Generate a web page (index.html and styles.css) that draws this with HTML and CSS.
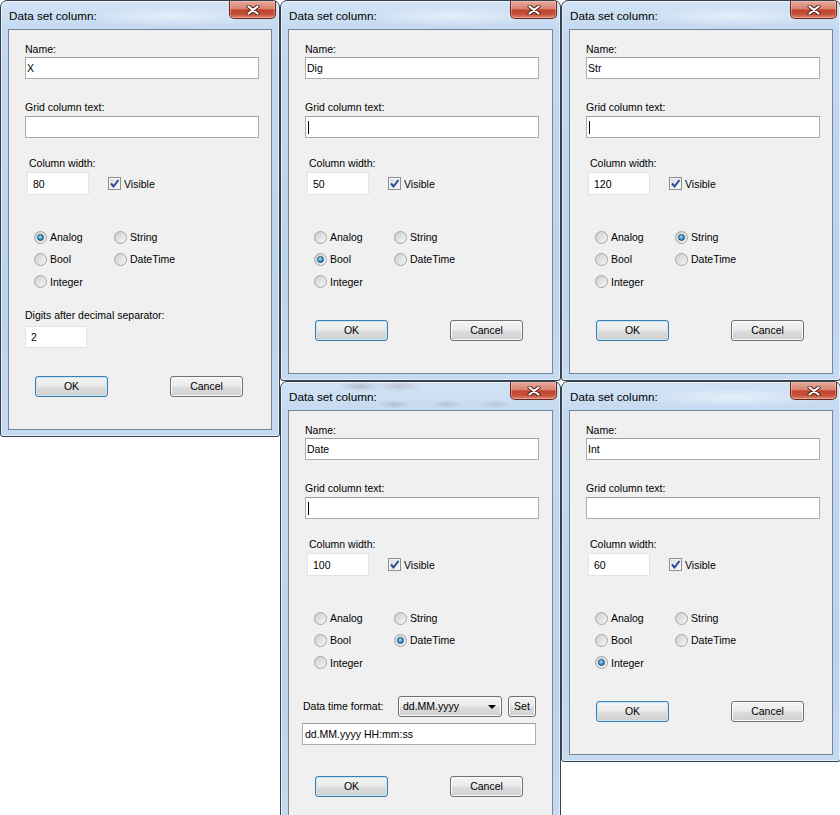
FILE: index.html
```html
<!DOCTYPE html>
<html lang="en">
<head>
  <meta charset="UTF-8">
  <meta name="viewport" content="width=device-width, initial-scale=1.0">
  <title>Data set column</title>
  <link rel="stylesheet" href="styles.css">
</head>
<body>
  <div class="desktop">

    <!-- Analog -->
    <div class="win win-1">
      <div class="titlebar"><span class="title">Data set column:</span></div>
      <div class="close-btn"><svg viewBox="0 0 14 10" width="14" height="10"><path d="M2.5 1.5 L11.5 8.5 M11.5 1.5 L2.5 8.5" stroke="#4b1d14" stroke-width="4" stroke-linecap="round"/><path d="M2.5 1.5 L11.5 8.5 M11.5 1.5 L2.5 8.5" stroke="#fff" stroke-width="2.2" stroke-linecap="round"/></svg></div>
      <div class="client">
        <label class="lbl">Name:</label>
        <div class="textbox wide">X</div>
        <label class="lbl lbl-grid">Grid column text:</label>
        <div class="textbox wide grid-box"></div>
        <div class="width-block">
          <label class="lbl">Column width:</label>
          <div class="width-row">
            <div class="textbox narrow">80</div>
            <span class="check"><svg viewBox="0 0 13 13" width="13" height="13"><path d="M3 6.5 L5.5 9.5 L10.5 3" fill="none" stroke="#2a4795" stroke-width="2"/></svg></span>
            <span class="check-text">Visible</span>
          </div>
        </div>
        <div class="radios">
          <div class="radio-item"><span class="radio on"></span>Analog</div>
          <div class="radio-item"><span class="radio"></span>String</div>
          <div class="radio-item"><span class="radio"></span>Bool</div>
          <div class="radio-item"><span class="radio"></span>DateTime</div>
          <div class="radio-item"><span class="radio"></span>Integer</div>
        </div>
        <label class="lbl lbl-digits">Digits after decimal separator:</label>
        <div class="textbox narrow digits-box">2</div>
        <div class="buttons">
          <button class="btn btn-default">OK</button>
          <button class="btn btn-cancel">Cancel</button>
        </div>
      </div>
    </div>

    <!-- Bool -->
    <div class="win win-2">
      <div class="titlebar"><span class="title">Data set column:</span></div>
      <div class="close-btn"><svg viewBox="0 0 14 10" width="14" height="10"><path d="M2.5 1.5 L11.5 8.5 M11.5 1.5 L2.5 8.5" stroke="#4b1d14" stroke-width="4" stroke-linecap="round"/><path d="M2.5 1.5 L11.5 8.5 M11.5 1.5 L2.5 8.5" stroke="#fff" stroke-width="2.2" stroke-linecap="round"/></svg></div>
      <div class="client">
        <label class="lbl">Name:</label>
        <div class="textbox wide">Dig</div>
        <label class="lbl lbl-grid">Grid column text:</label>
        <div class="textbox wide grid-box"><span class="caret"></span></div>
        <div class="width-block">
          <label class="lbl">Column width:</label>
          <div class="width-row">
            <div class="textbox narrow">50</div>
            <span class="check"><svg viewBox="0 0 13 13" width="13" height="13"><path d="M3 6.5 L5.5 9.5 L10.5 3" fill="none" stroke="#2a4795" stroke-width="2"/></svg></span>
            <span class="check-text">Visible</span>
          </div>
        </div>
        <div class="radios">
          <div class="radio-item"><span class="radio"></span>Analog</div>
          <div class="radio-item"><span class="radio"></span>String</div>
          <div class="radio-item"><span class="radio on"></span>Bool</div>
          <div class="radio-item"><span class="radio"></span>DateTime</div>
          <div class="radio-item"><span class="radio"></span>Integer</div>
        </div>
        <div class="buttons buttons-short">
          <button class="btn btn-default">OK</button>
          <button class="btn btn-cancel">Cancel</button>
        </div>
      </div>
    </div>

    <!-- String -->
    <div class="win win-3">
      <div class="titlebar"><span class="title">Data set column:</span></div>
      <div class="close-btn"><svg viewBox="0 0 14 10" width="14" height="10"><path d="M2.5 1.5 L11.5 8.5 M11.5 1.5 L2.5 8.5" stroke="#4b1d14" stroke-width="4" stroke-linecap="round"/><path d="M2.5 1.5 L11.5 8.5 M11.5 1.5 L2.5 8.5" stroke="#fff" stroke-width="2.2" stroke-linecap="round"/></svg></div>
      <div class="client">
        <label class="lbl">Name:</label>
        <div class="textbox wide">Str</div>
        <label class="lbl lbl-grid">Grid column text:</label>
        <div class="textbox wide grid-box"><span class="caret"></span></div>
        <div class="width-block">
          <label class="lbl">Column width:</label>
          <div class="width-row">
            <div class="textbox narrow">120</div>
            <span class="check"><svg viewBox="0 0 13 13" width="13" height="13"><path d="M3 6.5 L5.5 9.5 L10.5 3" fill="none" stroke="#2a4795" stroke-width="2"/></svg></span>
            <span class="check-text">Visible</span>
          </div>
        </div>
        <div class="radios">
          <div class="radio-item"><span class="radio"></span>Analog</div>
          <div class="radio-item"><span class="radio on"></span>String</div>
          <div class="radio-item"><span class="radio"></span>Bool</div>
          <div class="radio-item"><span class="radio"></span>DateTime</div>
          <div class="radio-item"><span class="radio"></span>Integer</div>
        </div>
        <div class="buttons buttons-short">
          <button class="btn btn-default">OK</button>
          <button class="btn btn-cancel">Cancel</button>
        </div>
      </div>
    </div>

    <!-- DateTime -->
    <div class="win win-4">
      <div class="titlebar titlebar-blur"><span class="title">Data set column:</span></div>
      <div class="close-btn"><svg viewBox="0 0 14 10" width="14" height="10"><path d="M2.5 1.5 L11.5 8.5 M11.5 1.5 L2.5 8.5" stroke="#4b1d14" stroke-width="4" stroke-linecap="round"/><path d="M2.5 1.5 L11.5 8.5 M11.5 1.5 L2.5 8.5" stroke="#fff" stroke-width="2.2" stroke-linecap="round"/></svg></div>
      <div class="client">
        <label class="lbl">Name:</label>
        <div class="textbox wide">Date</div>
        <label class="lbl lbl-grid">Grid column text:</label>
        <div class="textbox wide grid-box"><span class="caret"></span></div>
        <div class="width-block">
          <label class="lbl">Column width:</label>
          <div class="width-row">
            <div class="textbox narrow">100</div>
            <span class="check"><svg viewBox="0 0 13 13" width="13" height="13"><path d="M3 6.5 L5.5 9.5 L10.5 3" fill="none" stroke="#2a4795" stroke-width="2"/></svg></span>
            <span class="check-text">Visible</span>
          </div>
        </div>
        <div class="radios">
          <div class="radio-item"><span class="radio"></span>Analog</div>
          <div class="radio-item"><span class="radio"></span>String</div>
          <div class="radio-item"><span class="radio"></span>Bool</div>
          <div class="radio-item"><span class="radio on"></span>DateTime</div>
          <div class="radio-item"><span class="radio"></span>Integer</div>
        </div>
        <div class="format-row">
          <label class="format-lbl">Data time format:</label>
          <div class="combo">dd.MM.yyyy<span class="combo-arrow"></span></div>
          <button class="btn btn-set">Set</button>
        </div>
        <div class="textbox format-box">dd.MM.yyyy HH:mm:ss</div>
        <div class="buttons buttons-format">
          <button class="btn btn-default">OK</button>
          <button class="btn btn-cancel">Cancel</button>
        </div>
      </div>
    </div>

    <!-- Integer -->
    <div class="win win-5">
      <div class="titlebar"><span class="title">Data set column:</span></div>
      <div class="close-btn"><svg viewBox="0 0 14 10" width="14" height="10"><path d="M2.5 1.5 L11.5 8.5 M11.5 1.5 L2.5 8.5" stroke="#4b1d14" stroke-width="4" stroke-linecap="round"/><path d="M2.5 1.5 L11.5 8.5 M11.5 1.5 L2.5 8.5" stroke="#fff" stroke-width="2.2" stroke-linecap="round"/></svg></div>
      <div class="client">
        <label class="lbl">Name:</label>
        <div class="textbox wide">Int</div>
        <label class="lbl lbl-grid">Grid column text:</label>
        <div class="textbox wide grid-box"></div>
        <div class="width-block">
          <label class="lbl">Column width:</label>
          <div class="width-row">
            <div class="textbox narrow">60</div>
            <span class="check"><svg viewBox="0 0 13 13" width="13" height="13"><path d="M3 6.5 L5.5 9.5 L10.5 3" fill="none" stroke="#2a4795" stroke-width="2"/></svg></span>
            <span class="check-text">Visible</span>
          </div>
        </div>
        <div class="radios">
          <div class="radio-item"><span class="radio"></span>Analog</div>
          <div class="radio-item"><span class="radio"></span>String</div>
          <div class="radio-item"><span class="radio"></span>Bool</div>
          <div class="radio-item"><span class="radio"></span>DateTime</div>
          <div class="radio-item"><span class="radio on"></span>Integer</div>
        </div>
        <div class="buttons buttons-short">
          <button class="btn btn-default">OK</button>
          <button class="btn btn-cancel">Cancel</button>
        </div>
      </div>
    </div>

  </div>
</body>
</html>
```

FILE: styles.css
```css
body { margin: 0; background: #fff; font-family: "Liberation Sans", Arial, sans-serif; font-size: 10.5px; color: #000; overflow: hidden; }
.desktop { position: relative; width: 840px; height: 815px; overflow: hidden; }

/* windows on the desktop */
.win { position: absolute; box-sizing: border-box; display: flex; flex-direction: column; padding: 0 7px 6px; border: 1px solid #36414e; border-radius: 7px 7px 3px 3px; background: linear-gradient(to bottom, #d2e3f5 0, #c4d9f0 30px, #bcd3ec 70%, #c6daf0 100%); box-shadow: inset 0 0 0 1px rgba(255,255,255,0.55); }
.win-1 { left: 0; top: 0; width: 280px; height: 437px; }
.win-2 { left: 280px; top: 0; width: 281px; height: 381px; }
.win-3 { left: 561px; top: 0; width: 280px; height: 381px; }
.win-4 { left: 280px; top: 381px; width: 281px; height: 446px; }
.win-5 { left: 561px; top: 381px; width: 280px; height: 381px; }

.titlebar { height: 28px; flex: none; display: flex; align-items: center; background: radial-gradient(ellipse 90px 10px at 62% 55%, rgba(255,255,255,0.5), transparent); }
.titlebar-blur { background: radial-gradient(ellipse 22px 5px at 27% 15%, rgba(90,80,80,0.25), transparent), radial-gradient(ellipse 22px 5px at 42% 15%, rgba(140,60,60,0.2), transparent), radial-gradient(ellipse 16px 4px at 40% 80%, rgba(70,80,100,0.2), transparent), radial-gradient(ellipse 16px 4px at 60% 80%, rgba(70,80,100,0.18), transparent), radial-gradient(ellipse 16px 4px at 78% 80%, rgba(70,80,100,0.15), transparent); }
.title { font-size: 11.7px; padding-left: 1px; margin-top: 1px; }

.close-btn { position: absolute; top: 0; right: 3px; width: 47px; height: 18px; box-sizing: border-box; border: 1px solid #6b2a1e; border-top: none; border-radius: 0 0 5px 5px; background: linear-gradient(to bottom, #e6a99b 0, #d98574 45%, #c2452e 52%, #c5503a 78%, #dc8a74 100%); box-shadow: inset 0 0 0 1px rgba(255,220,210,0.35); display: flex; align-items: center; justify-content: center; }

.client { flex: 1; border: 1px solid #74869d; background: #f0f0f0; padding: 13px 0 0 16px; }

.lbl { display: block; line-height: 13px; height: 13px; white-space: nowrap; }
.lbl-grid { margin-top: 22px; }
.lbl-digits { margin-top: 16px; }

.textbox { box-sizing: border-box; height: 22px; background: #fff; border: 1px solid #abadb3; border-top-color: #9c9ea4; display: flex; align-items: center; padding-left: 1px; white-space: nowrap; }
.wide { width: 234px; margin-top: 1px; }
.grid-box { margin-top: 2px; }
.narrow { width: 62px; height: 23px; padding-left: 5px; border-color: #e2e3e6; }
.digits-box { height: 22px; margin-top: 4px; }
.caret { display: inline-block; width: 1px; height: 13px; background: #000; margin-left: 1px; }

.width-block { margin: 19px 0 0 2px; }
.width-block .lbl { padding-left: 2px; }
.width-row { display: flex; align-items: center; margin-top: 2px; }
.check { width: 13px; height: 13px; box-sizing: border-box; margin-left: 19px; border: 1px solid #8e8f8f; background: linear-gradient(135deg, #d6d9de, #fbfbfb); box-shadow: inset 0 0 0 1px #f4f4f4; display: flex; }
.check svg { margin: -1px; }
.check-text { margin-left: 3px; }

.radios { display: grid; grid-template-columns: 80px auto; grid-auto-rows: 22.3px; margin: 31px 0 0 9px; }
.radio-item { display: flex; align-items: center; white-space: nowrap; }
.radio { position: relative; width: 13px; height: 13px; box-sizing: border-box; border-radius: 50%; border: 1px solid #a2a4a6; background: linear-gradient(135deg, #cbcdd0, #f7f7f7); margin-right: 3px; flex: none; }
.radio.on::after { content: ''; position: absolute; left: 2px; top: 2px; width: 7px; height: 7px; box-sizing: border-box; border-radius: 50%; border: 1px solid #1c4f70; background: radial-gradient(circle at 40% 35%, #a8e2fb 0, #3796c9 55%, #125b86 100%); }

.buttons { display: flex; margin: 28px 0 0 10px; }
.buttons-short { margin-top: 27px; }
.buttons-format { margin-top: 31px; }
.btn { box-sizing: border-box; width: 73px; height: 21px; padding: 0; font-family: inherit; font-size: 10.5px; color: #000; border: 1px solid #707070; border-radius: 3px; background: linear-gradient(to bottom, #f3f3f3 0, #ebebeb 48%, #dddddd 52%, #cfcfcf 100%); box-shadow: inset 0 0 0 1px #fbfbfb; }
.btn-default { border-color: #3c7fb1; box-shadow: inset 0 0 0 1px #c4e6f8; }
.btn-cancel { margin-left: 62px; }

.format-row { display: flex; align-items: center; margin: 22px 0 0 -2px; height: 21px; }
.format-lbl { width: 95px; flex: none; }
.combo { position: relative; box-sizing: border-box; width: 104px; height: 21px; padding-left: 4px; display: flex; align-items: center; border: 1px solid #707070; border-radius: 3px; background: linear-gradient(to bottom, #f3f3f3 0, #ebebeb 48%, #dddddd 52%, #cfcfcf 100%); box-shadow: inset 0 0 0 1px #fbfbfb; }
.combo-arrow { position: absolute; right: 5px; top: 8px; width: 0; height: 0; border-left: 4px solid transparent; border-right: 4px solid transparent; border-top: 4px solid #000; }
.btn-set { width: 28px; margin-left: 6px; }
.format-box { width: 234px; margin: 6px 0 0 -3px; padding-left: 2px; }
```
